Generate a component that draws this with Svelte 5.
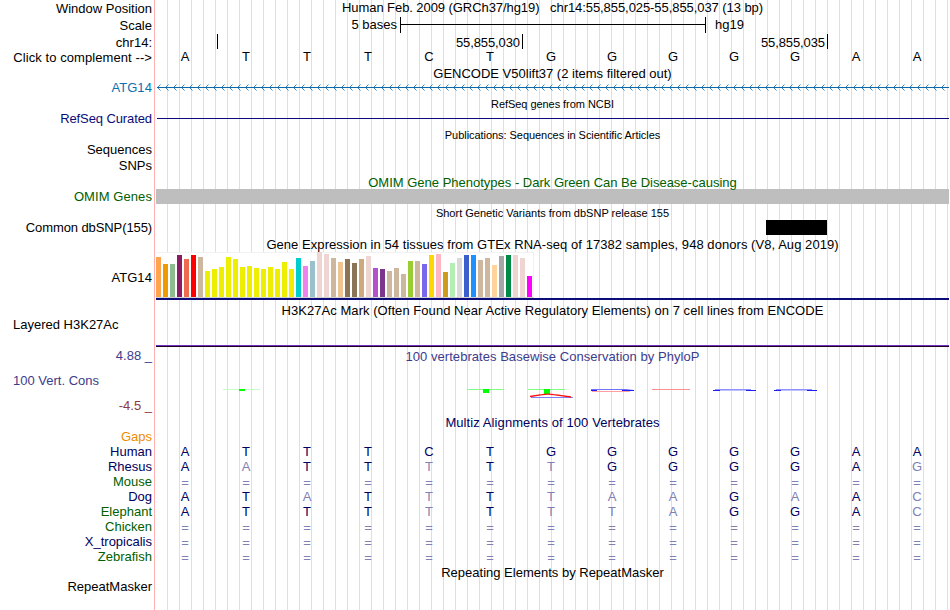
<script lang="ts">
	interface Label {
		text: string;
		gap: number;
		color?: string;
		left?: boolean;
	}

	// gap = free space above the label, every label line is 15px high
	const labels: Label[] = [
		{ text: 'Window Position', gap: 1 },
		{ text: 'Scale', gap: 2 },
		{ text: 'chr14:', gap: 2 },
		{ text: 'Click to complement -->', gap: 0, color: 'wide' },
		{ text: 'ATG14', gap: 15, color: 'gencode-name wide' },
		{ text: 'RefSeq Curated', gap: 16, color: 'refseq tight' },
		{ text: 'Sequences', gap: 16 },
		{ text: 'SNPs', gap: 1 },
		{ text: 'OMIM Genes', gap: 16, color: 'omim wide' },
		{ text: 'Common dbSNP(155)', gap: 16, color: 'tight' },
		{ text: 'ATG14', gap: 35, color: 'wide' },
		{ text: 'Layered H3K27Ac', gap: 32, left: true },
		{ text: '4.88 _', gap: 16, color: 'cons' },
		{ text: '100 Vert. Cons', gap: 10, color: 'cons', left: true },
		{ text: '-4.5 _', gap: 10, color: 'cons-min' },
		{ text: 'Gaps', gap: 16, color: 'gaps' },
		{ text: 'Human', gap: 0, color: 'navy' },
		{ text: 'Rhesus', gap: 0, color: 'navy' },
		{ text: 'Mouse', gap: 0, color: 'green' },
		{ text: 'Dog', gap: 0, color: 'navy' },
		{ text: 'Elephant', gap: 0, color: 'green' },
		{ text: 'Chicken', gap: 0, color: 'green' },
		{ text: 'X_tropicalis', gap: 0, color: 'navy' },
		{ text: 'Zebrafish', gap: 0, color: 'green' },
		{ text: 'RepeatMasker', gap: 15 },
	];

	const reference = 'ATTTCTGGGGGAA';

	// one row per species, in label order
	const alignments = [
		reference,
		'AATTTTTGGGGAG',
		'=============',
		'ATATTTTAAGAAC',
		'ATTTTTTTAGGAC',
		'=============',
		'=============',
		'=============',
	];

	// strand arrows along the GENCODE transcript
	const arrows = Array.from({ length: 99 }, (_, i) => 157 + i * 8);

	// GTEx tissues: [height, color]
	const tissues: [number, string][] = [
		[40, '#ffa54f'],
		[33, '#ee9a00'],
		[33, '#8fbc8f'],
		[42, '#8b1c62'],
		[38, '#ee6a50'],
		[42, '#ff0000'],
		[40, '#cdb79e'],
		...[26, 28, 30, 40, 38, 30, 31, 29, 28, 30, 28, 35, 28].map((h): [number, string] => [h, '#eeee00']),
		[39, '#00cdcd'],
		[31, '#ee82ee'],
		[36, '#9ac0cd'],
		[45, '#eed5d2'],
		[43, '#eed5d2'],
		[39, '#cdb79e'],
		[35, '#eec591'],
		[38, '#8b7355'],
		[34, '#8b7355'],
		[38, '#cdaa7d'],
		[41, '#eed5d2'],
		[29, '#b452cd'],
		[28, '#7a378b'],
		[26, '#cdb79e'],
		[29, '#cdb79e'],
		[23, '#cdb79e'],
		[36, '#9acd32'],
		[36, '#cdb79e'],
		[33, '#7a67ee'],
		[42, '#ffd700'],
		[43, '#ffb6c1'],
		[25, '#cd9b1d'],
		[34, '#b4eeb4'],
		[39, '#d9d9d9'],
		[42, '#3a5fcd'],
		[42, '#1e90ff'],
		[37, '#cdb79e'],
		[39, '#cdb79e'],
		[32, '#ffd39b'],
		[41, '#a6a6a6'],
		[42, '#008b45'],
		[42, '#eed5d2'],
		[39, '#eed5d2'],
		[21, '#ff00ff'],
	];
</script>

<div class="browser">
	<div class="labels">
		{#each labels as label}
			<div class="label {label.color ?? ''}" class:left={label.left} style="margin-top: {label.gap}px">{label.text}</div>
		{/each}
	</div>

	<div class="tracks">
		<h1 class="title position">Human Feb. 2009 (GRCh37/hg19) &nbsp; chr14:55,855,025-55,855,037 (13 bp)</h1>

		<div class="scale">
			<span class="scale-text">5 bases</span>
			<span class="scale-bar"></span>
			<span>hg19</span>
		</div>

		<div class="ruler">
			<span class="tick first"></span>
			<span class="tick">55,855,030</span>
			<span class="tick">55,855,035</span>
		</div>

		<div class="bases">
			{#each reference as base}
				<span>{base}</span>
			{/each}
		</div>

		<h2 class="title">GENCODE V50lift37 (2 items filtered out)</h2>
		<svg class="gencode" width="793" height="17" viewBox="156 81 793 17">
			<path d="M157 87.5H949" />
			{#each arrows as x}
				<path class="chevron" d="M{x + 3.5} 84.5L{x + 0.5} 87.5L{x + 3.5} 90.5" />
			{/each}
		</svg>

		<h2 class="title small">RefSeq genes from NCBI</h2>
		<div class="refseq-line"></div>

		<h2 class="title small">Publications: Sequences in Scientific Articles</h2>

		<h2 class="title omim omim-title">OMIM Gene Phenotypes - Dark Green Can Be Disease-causing</h2>
		<div class="omim-bar"></div>

		<h2 class="title small snp-title">Short Genetic Variants from dbSNP release 155</h2>
		<div class="snp"></div>

		<h2 class="title gtex-title">Gene Expression in 54 tissues from GTEx RNA-seq of 17382 samples, 948 donors (V8, Aug 2019)</h2>
		<div class="gtex">
			<div class="gtex-bars">
				{#each tissues as [height, color]}
					<span style="height: {height}px; background: {color}"></span>
				{/each}
			</div>
		</div>

		<h2 class="title h3k-title">H3K27Ac Mark (Often Found Near Active Regulatory Elements) on 7 cell lines from ENCODE</h2>
		<div class="h3k"></div>

		<h2 class="title cons cons-title">100 vertebrates Basewise Conservation by PhyloP</h2>
		<svg class="phylop" width="793" height="51" viewBox="156 364 793 51">
			<rect x="223" y="389" width="37" height="1" fill="#c8ffc8" />
			<rect x="239" y="389" width="6" height="2" fill="#00ff00" />
			<rect x="467" y="389" width="37" height="1" fill="#80ff80" />
			<rect x="483" y="389" width="6" height="4" fill="#00ff00" />
			<rect x="528" y="389" width="37" height="1" fill="#80ff80" />
			<rect x="544" y="389" width="6" height="5" fill="#00ff00" />
			<path d="M531 397.5H573" stroke="#8080ff" />
			<path d="M530 396.5L542 394.7Q548 393.6 554 394.7L571 397" fill="none" stroke="#ff1010" stroke-width="1.3" />
			<path d="M592 391.5H630" stroke="#ffa0a0" />
			<path d="M591 389.5H626L634 390.5" fill="none" stroke="#7070ff" />
			<path d="M591 390.5H597M622 390.5H634" stroke="#2020f0" />
			<path d="M652 389.5H690" stroke="#ff9090" />
			{#each [713, 774] as x}
				<path d="M{x + 2} 389.5H{x + 38}" stroke="#9090ff" />
				<path d="M{x} 390.5H{x + 7}M{x + 33} 390.5H{x + 43}" stroke="#2020f0" />
				<path d="M{x + 7} 390.5H{x + 33}" stroke="#c0c0ff" />
			{/each}
		</svg>

		<h2 class="title navy multiz-title">Multiz Alignments of 100 Vertebrates</h2>
		<div class="alignments">
			{#each alignments as row}
				<div class="bases aligned">
					{#each row as base, i}
						<span class:mismatch={base !== reference[i]} class:gap={base === '='}>{base}</span>
					{/each}
				</div>
			{/each}
		</div>

		<h2 class="title">Repeating Elements by RepeatMasker</h2>
	</div>
</div>

<style>
	:global(body) {
		background: #fff;
	}

	.browser {
		display: flex;
		width: 950px;
		height: 610px;
		overflow: hidden;
		font: 13px/15px 'Liberation Sans', Arial, sans-serif;
		color: #000;
		white-space: nowrap;
	}

	.labels {
		box-sizing: border-box;
		width: 155px;
		padding: 0 2px 0 13px;
		border-right: 1px solid #ffb0b0;
		text-align: right;
	}

	.label {
		height: 15px;
	}

	.left {
		text-align: left;
	}

	.wide {
		letter-spacing: 0.08px;
	}

	.tight {
		letter-spacing: -0.1px;
	}

	.gencode-name {
		color: #0c70b0;
	}

	.refseq {
		color: #0c0c78;
	}

	.omim,
	.green {
		color: #006000;
	}

	.cons {
		color: #3c3c8c;
	}

	.cons-min {
		color: #8c3c3c;
	}

	.gaps {
		color: #ee8c00;
	}

	.navy {
		color: #000060;
	}

	.tracks {
		box-sizing: border-box;
		width: 795px;
		padding: 0 1px;
		background: repeating-linear-gradient(to right, #fff 0 11px, #dcdcf8 11px 12px) 1px 0 no-repeat;
	}

	.title {
		height: 15px;
		margin: 0;
		font-size: 13px;
		font-weight: normal;
		line-height: 15px;
		text-align: center;
	}

	.small {
		height: 13px;
		font-size: 11px;
		line-height: 13px;
		letter-spacing: -0.05px;
	}

	.position {
		letter-spacing: -0.07px;
	}

	.scale {
		display: flex;
		height: 16px;
		margin-top: 2px;
	}

	.scale-text {
		width: 241px;
		margin-right: 3px;
		text-align: right;
	}

	.scale-bar {
		box-sizing: border-box;
		width: 306px;
		height: 16px;
		margin-right: 9px;
		border: solid #000;
		border-width: 0 1px;
		background: linear-gradient(#000, #000) 0 7px / 100% 1px no-repeat;
	}

	.ruler {
		display: flex;
		height: 15px;
		margin-top: 1px;
	}

	.tick {
		box-sizing: border-box;
		width: 305px;
		height: 15px;
		padding-right: 2px;
		border-right: 1px solid #000;
		line-height: 17px;
		letter-spacing: -0.1px;
		text-align: right;
	}

	.tick.first {
		width: 62px;
	}

	.bases {
		display: grid;
		grid-template-columns: repeat(13, 61px);
		height: 17px;
		margin-left: -1.5px;
		text-align: center;
	}

	.gencode {
		display: block;
		fill: none;
		stroke: #0c68a8;
	}

	.chevron {
		stroke-width: 0.8;
	}

	.refseq-line {
		height: 1px;
		margin: 7px 0 10px 1px;
		background: #0c0c78;
	}

	.omim-title {
		margin-top: 33px;
	}

	.omim-bar {
		height: 15px;
		margin-top: -1px;
		background: #bebebe;
	}

	.snp-title {
		margin-top: 3px;
		letter-spacing: 0;
	}

	.snp {
		width: 61px;
		height: 15px;
		margin-left: 610px;
		background: #000;
	}

	.gtex-title {
		margin-top: 2px;
		letter-spacing: 0.055px;
	}

	.gtex {
		box-sizing: border-box;
		height: 48px;
		border-bottom: 2px solid #0c0c78;
	}

	.gtex-bars {
		box-sizing: border-box;
		display: flex;
		align-items: flex-end;
		gap: 2px;
		width: 378px;
		height: 46px;
		border: solid #f2f2f2;
		border-width: 1px 1px 0 0;
		border-bottom: 1px solid #d0d0d0;
		background: #fff;
	}

	.gtex-bars span {
		flex: none;
		width: 5px;
	}

	.h3k-title {
		margin-top: 3px;
		letter-spacing: 0.05px;
	}

	.h3k {
		height: 1px;
		margin-top: 27px;
		border-bottom: 1px solid #200020;
		background: #7030c0;
	}

	.cons-title {
		margin-top: 2px;
		letter-spacing: 0.04px;
	}

	.phylop {
		display: block;
	}

	.multiz-title {
		letter-spacing: 0.09px;
	}

	.alignments {
		margin: 14px 0 1px;
	}

	.aligned {
		height: 15px;
		color: #000060;
	}

	.mismatch {
		color: #8080b4;
	}

	.gap {
		line-height: 17px;
	}
</style>
